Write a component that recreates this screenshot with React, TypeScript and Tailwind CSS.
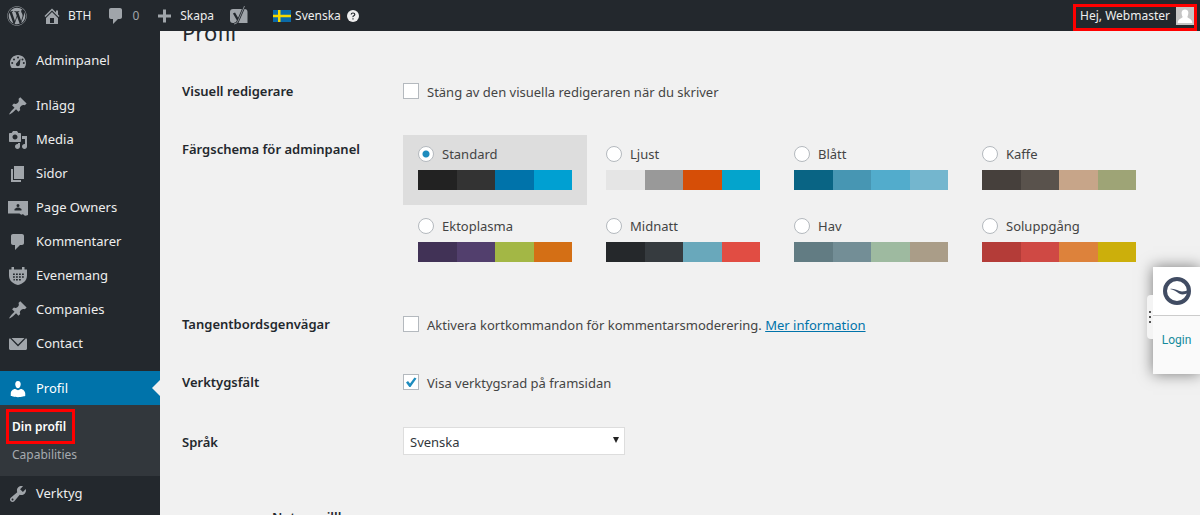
import type { ReactNode } from 'react'
import { FaWordpress } from 'react-icons/fa'

const icons = {
  home: 'M16 8.5l1.53 1.53-1.06 1.06L10 4.6l-6.47 6.49-1.06-1.06L10 2.5l4 4v-2h2v4zm-6-2.46l6 5.99V18H4v-5.97zM12 17v-5H8v5h4z',
  comment: 'M5 2h9c1.1 0 2 .9 2 2v7c0 1.1-.9 2-2 2h-2l-5 5v-5H5c-1.1 0-2-.9-2-2V4c0-1.1.9-2 2-2z',
  plus: 'M17 8.5v3h-5v5H9v-5H4v-3h5v-5h3v5h5z',
  dashboard:
    'M3.76 17h12.48c1.1-1.37 1.76-3.11 1.76-5 0-4.42-3.58-8-8-8s-8 3.58-8 8c0 1.89.66 3.63 1.76 5zM10 5.5a1 1 0 1 1 0 2a1 1 0 1 1 0-2zM6 7.5a1 1 0 1 1 0 2a1 1 0 1 1 0-2zM14.5 7.5a1 1 0 1 1 0 2a1 1 0 1 1 0-2zM8.63 12.05L12.5 7.5l-.6 5.7c0 1.1-.9 2-2 2s-2-.9-2-2c0-.5.3-.9.73-1.15zM4.2 11a1 1 0 1 1 0 2a1 1 0 1 1 0-2zM15.8 11a1 1 0 1 1 0 2a1 1 0 1 1 0-2z',
  pin: 'M10.44 3.02l1.82-1.82 6.36 6.35-1.83 1.82c-1.05-.68-2.48-.57-3.41.36l-.75.75c-.92.93-1.04 2.35-.35 3.41l-1.83 1.82-2.41-2.41-2.8 2.79c-.42.42-3.38 2.71-3.8 2.29s1.86-3.39 2.28-3.81l2.79-2.79L4.1 9.36l1.83-1.82c1.05.69 2.48.57 3.4-.36l.75-.75c.93-.92 1.05-2.35.36-3.41z',
  media:
    'M13 11V4c0-.55-.45-1-1-1h-1.67L9 1H5L3.67 3H2c-.55 0-1 .45-1 1v7c0 .55.45 1 1 1h10c.55 0 1-.45 1-1zM7 4.5c1.38 0 2.5 1.12 2.5 2.5S8.38 9.5 7 9.5 4.5 8.38 4.5 7 5.62 4.5 7 4.5zM14 6h5v10.5c0 1.38-1.12 2.5-2.5 2.5S14 17.88 14 16.5s1.12-2.5 2.5-2.5c.17 0 .34.02.5.05V9h-3V6zm-4 8.05V13h2v3.5c0 1.38-1.12 2.5-2.5 2.5S7 17.88 7 16.5 8.12 14 9.5 14c.17 0 .34.02.5.05z',
  page: 'M6 15V2h10v13H6zm-1 1h8v2H3V5h2v11z',
  owners:
    'M0 3h20.500v10.500a2.500 2.500 0 0 1-2 4a3 3 0 0 1-3.500-1.500a2.500 2.500 0 0 1-3.500-.5H0zM10 6a1.500 1.500 0 1 0 0 3a1.500 1.500 0 1 0 0-3zM6.500 12.500h7v-1.500l-2.500-1.500h-2l-2.500 1.500z',
  calendar:
    'M3.500 1h2.500v2.500h8v-2.500h2.500v2.500h2.500v6c0 5-4 8.500-9 9.500c-5-1-9-4.500-9-9.500v-6h2.500zM5 7.500v1.500h1.800v-1.500zM8 7.500v1.500h1.800v-1.500zM11 7.500v1.500h1.800v-1.500zM14 7.500v1.500h1.800v-1.500zM5 10.300v1.500h1.800v-1.500zM8 10.300v1.500h1.800v-1.500zM11 10.300v1.500h1.800v-1.500zM14 10.300v1.500h1.800v-1.500zM5.500 13v1.500h1.300v-1.500zM8 13v1.500h1.800v-1.500zM11 13v1.500h1.800v-1.500z',
  mail: 'M3.500 4h13l-6.500 6.500L3.500 4zM2 4.300L10 12.500l8-8.200c.6.200 1 .6 1 1.200v9c0 .83-.67 1.500-1.500 1.500h-15c-.83 0-1.500-.67-1.500-1.500v-9c0-.6.400-1 1-1.200z',
  user: 'M10 9.250c-2.270 0-2.730-3.440-2.730-3.440C7 4.020 7.820 2 9.970 2c2.160 0 2.980 2.020 2.710 3.810 0 0-.41 3.440-2.680 3.440zM10 11.200L12.720 10c2.390 0 4.520 2.330 4.520 4.530v2.490s-3.650 1.130-7.240 1.130c-3.650 0-7.240-1.130-7.240-1.130v-2.490c0-2.250 1.940-4.480 4.470-4.480z',
  tools:
    'M16.68 9.77c-1.34 1.34-3.3 1.67-4.95.99l-5.41 6.52c-.99.99-2.59.99-3.58 0s-.99-2.59 0-3.57l6.52-5.42c-.68-1.65-.35-3.61.99-4.95 1.28-1.28 3.12-1.62 4.72-1.06l-2.89 2.89 2.82 2.82 2.86-2.87c.53 1.58.18 3.39-1.08 4.65zM3.81 16.21c.4.39 1.04.39 1.43 0 .4-.4.4-1.04 0-1.43-.39-.4-1.03-.4-1.43 0-.39.39-.39 1.03 0 1.43z',
}

type IconName = keyof typeof icons

function Icon({ name }: { name: IconName }) {
  return (
    <svg viewBox="0 0 20 20" className="size-5 shrink-0" fill="currentColor" fillRule="evenodd" aria-hidden="true">
      <path d={icons[name]} />
    </svg>
  )
}

const menu: { icon: IconName; label: string }[] = [
  { icon: 'pin', label: 'Inlägg' },
  { icon: 'media', label: 'Media' },
  { icon: 'page', label: 'Sidor' },
  { icon: 'owners', label: 'Page Owners' },
  { icon: 'comment', label: 'Kommentarer' },
  { icon: 'calendar', label: 'Evenemang' },
  { icon: 'pin', label: 'Companies' },
  { icon: 'mail', label: 'Contact' },
]

const schemes = [
  { name: 'Standard', colors: ['#222222', '#333333', '#0073aa', '#00a0d2'] },
  { name: 'Ljust', colors: ['#e5e5e5', '#999999', '#d64e07', '#04a4cc'] },
  { name: 'Blått', colors: ['#096484', '#4796b3', '#52accc', '#74b6ce'] },
  { name: 'Kaffe', colors: ['#46403c', '#59524c', '#c7a589', '#9ea476'] },
  { name: 'Ektoplasma', colors: ['#413256', '#523f6d', '#a3b745', '#d46f15'] },
  { name: 'Midnatt', colors: ['#25282b', '#363b3f', '#69a8bb', '#e14d43'] },
  { name: 'Hav', colors: ['#627c83', '#738e96', '#9ebaa0', '#aa9d88'] },
  { name: 'Soluppgång', colors: ['#b43c38', '#cf4944', '#dd823b', '#ccaf0b'] },
]

function MenuItem({ icon, label }: { icon: IconName; label: string }) {
  return (
    <a href="#" className="flex h-[34px] items-center gap-2 pl-2 pt-0.5 text-[#eee]">
      <span className="text-[#a0a5aa]">
        <Icon name={icon} />
      </span>
      {label}
    </a>
  )
}

function AdminBar() {
  return (
    <header className="relative z-10 flex h-[31px] shrink-0 items-center bg-[#23282d] pl-[7px] text-[12px] text-[#eee]">
      <a href="#" aria-label="WordPress" className="text-[#a0a5aa]">
        <FaWordpress className="size-5" />
      </a>
      <a href="#" className="ml-[15px] flex items-center gap-1.5">
        <span className="text-[#a0a5aa]">
          <Icon name="home" />
        </span>
        BTH
      </a>
      <a href="#" className="ml-[15px] flex items-center gap-1.5 text-[#a0a5aa]">
        <Icon name="comment" />
        0
      </a>
      <a href="#" className="ml-[15px] flex items-center gap-1.5">
        <span className="text-[#a0a5aa]">
          <Icon name="plus" />
        </span>
        Skapa
      </a>
      <a href="#" aria-label="SEO" className="ml-[15px]">
        <svg viewBox="0 0 20 20" className="size-5">
          <path fill="#a0a5aa" d="M4 3h11.500a3 3 0 0 1 3 3v11H4a3 3 0 0 1-3-3V6a3 3 0 0 1 3-3z" />
          <path fill="none" stroke="#23282d" strokeWidth="2.400" d="M5 7l4 7M15.500 0l-6.500 15q-1 3-4 3" />
          <path fill="none" stroke="#a0a5aa" strokeWidth="0.800" d="M15.500 0l-6.500 15q-1 3-4 3" />
        </svg>
      </a>
      <a href="#" className="ml-6 flex items-center gap-1">
        <svg viewBox="0 0 18 12" className="h-3 w-[18px]" aria-hidden="true">
          <path fill="#0a6aa8" d="M0 0h18v12H0z" />
          <path fill="#f5d800" d="M5 0h2.500v12H5zM0 4.800h18v2.400H0z" />
        </svg>
        Svenska
        <svg viewBox="0 0 12 12" className="ml-0.5 size-3" aria-hidden="true">
          <circle cx="6" cy="6" r="6" fill="#eee" />
          <path
            fill="none"
            stroke="#23282d"
            strokeWidth="1.200"
            d="M4.200 4.600q0-1.600 1.800-1.600t1.800 1.500q0 .8-1 1.300t-.8 1.400M6 8.200v1.400"
          />
        </svg>
      </a>
      <a href="#" className="ml-auto mr-[3px] mt-1 flex h-[27px] items-center gap-1.5 border-3 border-[#f00] pb-[3px] pl-1">
        Hej, Webmaster
        <svg viewBox="0 0 18 18" className="size-[18px]" aria-hidden="true">
          <path fill="#c5c5c5" d="M0 0h18v18H0z" />
          <path fill="#fff" d="M9 2.500c4 0 4 4 2.300 7.500c0 1 5 1.500 5 6H1.700c0-4.500 5-5 5-6C5 6.500 5 2.500 9 2.500z" />
        </svg>
      </a>
    </header>
  )
}

function Sidebar() {
  return (
    <nav className="w-40 shrink-0 bg-[#23282d] pt-3 text-[13px]">
      <MenuItem icon="dashboard" label="Adminpanel" />
      <div className="my-[11px]">
        {menu.map((item) => (
          <MenuItem key={item.label} {...item} />
        ))}
      </div>
      <a href="#" className="relative flex h-[34px] items-center gap-2 bg-[#0073aa] pl-2 pt-0.5 text-white">
        <Icon name="user" />
        Profil
        <span className="absolute right-0 top-[9px] border-y-8 border-r-8 border-y-transparent border-r-[#f1f1f1]" />
      </a>
      <div className="flex h-[71px] flex-col items-start bg-[#32373c] pl-1.5 pt-1 text-[12px]">
        <a href="#" className="flex h-[35px] items-center border-3 border-[#f00] pl-[3px] pr-1.5 font-semibold text-white">
          Din profil
        </a>
        <a href="#" className="flex h-5 items-center pl-1.5 pt-0.5 text-[#a5aaaf]">
          Capabilities
        </a>
      </div>
      <MenuItem icon="tools" label="Verktyg" />
    </nav>
  )
}

function Row({ label, htmlFor, children }: { label: string; htmlFor?: string; children: ReactNode }) {
  return (
    <div className="grid grid-cols-[221px_1fr]">
      {htmlFor ? (
        <label htmlFor={htmlFor} className="self-start pt-0.5 font-semibold leading-5 text-[#23282d]">
          {label}
        </label>
      ) : (
        <span className="h-5 font-semibold leading-5 text-[#23282d]">{label}</span>
      )}
      {children}
    </div>
  )
}

function Checkbox({ id, checked = false }: { id: string; checked?: boolean }) {
  return (
    <span className="relative size-4 shrink-0">
      <input
        id={id}
        type="checkbox"
        defaultChecked={checked}
        className="peer block size-4 appearance-none border border-[#b4b9be] bg-white"
      />
      <svg
        viewBox="0 0 16 16"
        className="pointer-events-none absolute inset-0 hidden size-4 peer-checked:block"
        aria-hidden="true"
      >
        <path fill="#1e8cbe" d="M3 8.500l2-1.500 2 2.500L11.500 3.500l2 1L7.500 13h-1.200z" />
      </svg>
    </span>
  )
}

function ColorSchemes() {
  return (
    <div className="-mt-1 flex flex-wrap gap-x-1 gap-y-0.5" role="radiogroup" aria-label="Färgschema för adminpanel">
      {schemes.map((scheme) => (
        <label key={scheme.name} className="w-[184px] px-[15px] pb-[15px] pt-[9px] has-checked:bg-[#ddd]">
          <span className="flex h-5 items-center gap-2">
            <input
              type="radio"
              name="admin_color"
              defaultChecked={scheme.name === 'Standard'}
              className="size-4 appearance-none rounded-full border border-[#b4b9be] bg-white checked:bg-[radial-gradient(circle,#1e8cbe_3px,white_4px)]"
            />
            <span className="pt-0.5">{scheme.name}</span>
          </span>
          <span className="mt-1.5 flex h-5">
            {scheme.colors.map((color) => (
              <span key={color} className="flex-1" style={{ backgroundColor: color }} />
            ))}
          </span>
        </label>
      ))}
    </div>
  )
}

function LoginPanel() {
  return (
    <aside className="absolute right-0 top-[267px] z-20">
      <div className="relative h-[107px] w-[47px] bg-[#fafafa] shadow-[0_0_14px_rgba(0,0,0,0.5)]">
        <div className="absolute -left-1.5 top-7 flex h-11 w-1.5 flex-col items-center justify-center gap-[3px] rounded-l bg-[#f4f4f4]">
          <span className="size-0.5 bg-[#555]" />
          <span className="size-0.5 bg-[#555]" />
          <span className="size-0.5 bg-[#555]" />
        </div>
        <div className="flex h-[49px] items-center justify-center border-b border-[#ccc] bg-white">
          <svg viewBox="0 0 28 28" className="size-7" aria-hidden="true">
            <circle cx="14" cy="14" r="12" fill="none" stroke="#414c63" strokeWidth="4" />
            <path fill="#414c63" d="M7 12c5-1 8 2.500 12 2.500c3 0 5-1 6-2v3.500c-3 1.500-6 2-9 .5c-3-2-5-4-9-4.500z" />
          </svg>
        </div>
        <a href="#" className="mt-3 block text-center font-[Roboto,sans-serif] text-[12px] leading-6 text-[#168a9c]">
          Login
        </a>
      </div>
    </aside>
  )
}

export default function App() {
  return (
    <div className="relative flex h-screen flex-col overflow-hidden bg-[#f1f1f1] font-['Noto_Sans',sans-serif] text-[13px] text-[#444]">
      <AdminBar />
      <div className="flex min-h-0 flex-1">
        <Sidebar />
        <main className="flex-1 overflow-hidden px-[22px]">
          <h1 className="-mt-3.5 text-[22px] leading-[30px] text-[#23282d]">Profil</h1>
          <form className="mt-[34px]">
            <Row label="Visuell redigerare">
              <label className="flex h-5 items-center gap-2">
                <Checkbox id="rich_editing" />
                <span className="pt-1">Stäng av den visuella redigeraren när du skriver</span>
              </label>
            </Row>
            <div className="mt-[38px]">
              <Row label="Färgschema för adminpanel">
                <ColorSchemes />
              </Row>
            </div>
            <div className="mt-[37px] flex flex-col gap-[38px]">
              <Row label="Tangentbordsgenvägar">
                <div className="flex h-5 items-center gap-2">
                  <Checkbox id="comment_shortcuts" />
                  <span className="pt-1">
                    <label htmlFor="comment_shortcuts">Aktivera kortkommandon för kommentarsmoderering.</label>{' '}
                    <a href="#" className="text-[#0073aa] underline">
                      Mer information
                    </a>
                  </span>
                </div>
              </Row>
              <Row label="Verktygsfält">
                <label className="flex h-5 items-center gap-2">
                  <Checkbox id="admin_bar_front" checked />
                  <span className="pt-1">Visa verktygsrad på framsidan</span>
                </label>
              </Row>
              <Row label="Språk" htmlFor="locale">
                <div className="relative -mt-[3px] w-[222px]">
                  <select
                    id="locale"
                    className="block h-7 w-full appearance-none border border-[#ddd] bg-white pl-1.5 pt-1 text-[#32373c]"
                  >
                    <option>Svenska</option>
                  </select>
                  <span className="pointer-events-none absolute right-1.5 top-2.5 border-x-3 border-t-6 border-x-transparent border-t-[#222]" />
                </div>
              </Row>
            </div>
            <h2 className="ml-[90px] mt-[52px] font-semibold leading-5 text-[#23282d]">Notera villkor</h2>
          </form>
        </main>
      </div>
      <LoginPanel />
    </div>
  )
}
